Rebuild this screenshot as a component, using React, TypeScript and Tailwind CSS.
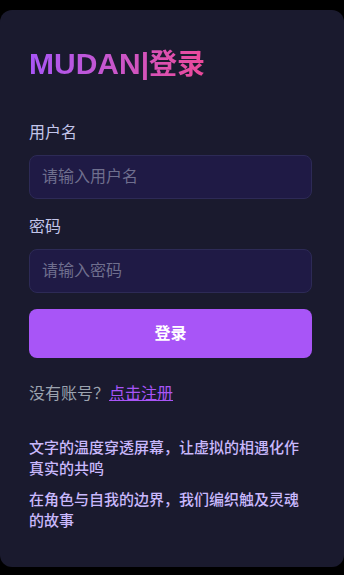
import { useState } from 'react';

const font = { fontFamily: '"Liberation Sans", "Noto Sans CJK SC", sans-serif' };

export default function App() {
  const [username, setUsername] = useState('');
  const [password, setPassword] = useState('');

  return (
    <div className="min-h-screen bg-black pt-[10px] pb-2" style={font}>
      <div className="rounded-xl bg-[#1a1a2e] pl-[29px] pr-[32px] pt-[36px] pb-[36px]">
        {/* Title */}
        <h1 className="text-[30px] font-bold leading-9 bg-gradient-to-r from-[#a855f7] to-[#ec4899] bg-clip-text text-transparent w-fit">
          MUDAN|<span className="text-[28px]">登录</span>
        </h1>

        {/* Form */}
        <form className="mt-[38px]" onSubmit={(e) => e.preventDefault()}>
          <div className="mb-4">
            <label className="block text-base leading-6 text-[#c3c5ea] mb-[10px]">用户名</label>
            <input
              value={username}
              onChange={(e) => setUsername(e.target.value)}
              placeholder="请输入用户名"
              className="w-full h-[44px] rounded-lg border border-[#2d2a56] bg-[#1f1a45] px-3 text-base text-white placeholder:text-[#6f6f8e] outline-none"
            />
          </div>
          <div className="mb-4">
            <label className="block text-base leading-6 text-[#c3c5ea] mb-[10px]">密码</label>
            <input
              type="password"
              value={password}
              onChange={(e) => setPassword(e.target.value)}
              placeholder="请输入密码"
              className="w-full h-[44px] rounded-lg border border-[#2d2a56] bg-[#1f1a45] px-3 text-base text-white placeholder:text-[#6f6f8e] outline-none"
            />
          </div>
          <button
            type="submit"
            className="w-full h-[49px] rounded-lg bg-[#a855f7] text-base font-bold text-white"
          >
            登录
          </button>
        </form>

        <p className="mt-6 text-base leading-6 text-[#9ca3af]">
          没有账号？<a href="#" className="text-[#a855f7] underline">点击注册</a>
        </p>

        {/* Slogan */}
        <div className="mt-[31px] max-w-[280px] text-[15px] font-medium leading-[21px] text-[#c9b8fc]">
          <p className="mb-[10px]">文字的温度穿透屏幕，让虚拟的相遇化作真实的共鸣</p>
          <p>在角色与自我的边界，我们编织触及灵魂的故事</p>
        </div>
      </div>
    </div>
  );
}
